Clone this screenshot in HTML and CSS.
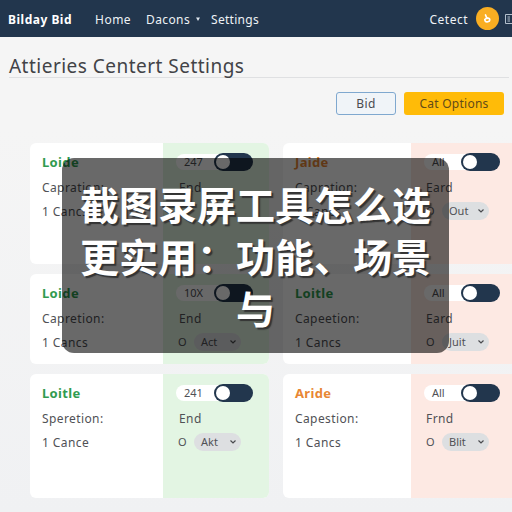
FILE: index.html
```
<!DOCTYPE html>
<html lang="zh">
<head>
<meta charset="utf-8">
<title>Attieries Centert Settings</title>
<link rel="stylesheet" href="styles.css">
</head>
<body>
<header class="nav">
  <span class="brand">Bilday Bid</span>
  <span class="link home">Home</span>
  <span class="link dacons">Dacons</span>
  <svg class="nav-caret" viewBox="0 0 4 4"><path d="M0 .5h4L2 4z" fill="#dfe6ee"/></svg>
  <span class="link settings">Settings</span>
  <span class="link account">Cetect</span>
  <span class="avatar"><svg viewBox="0 0 23 23"><path d="M9.500 8l1.500 3.500M8.800 12.500c2-2.500 5-1.500 5 .300 0 2.300-3.600 2.600-4.600 1.200z" fill="none" stroke="#fff" stroke-width="1.700" stroke-linecap="round" stroke-linejoin="round"/></svg></span>
  <svg class="grid-icon" viewBox="0 0 10 10"><path d="M.5.500H10M.5.500v9H10M2.500 3H5M2.500 5H5M2.500 7H5M7 2h3M7 4.500h3M7 7h3" fill="none" stroke="#b3c0cd"/></svg>
</header>
<h1 class="title">Attieries Centert Settings</h1>
<div class="actions">
  <button class="btn outline">Bid</button>
  <button class="btn solid">Cat Options</button>
</div>
<main class="cards">
  <section class="card green">
    <div class="info"><h2>Loide</h2><p>Capration:</p><p>1 Cancs</p></div>
    <div class="side"><div class="switch"><span class="value">247</span><span class="toggle"></span></div><p>End</p></div>
  </section>
  <section class="card red">
    <div class="info"><h2 class="orange">Jaide</h2><p>Capration:</p><p>1 Cancs</p></div>
    <div class="side"><div class="switch"><span class="value">All</span><span class="toggle"></span></div><p>Eard</p>
      <div class="pick"><span class="zero">O</span><span class="select">Out<svg viewBox="0 0 6 4"><path d="M.5.500 3 3 5.500.5"/></svg></span></div></div>
  </section>
  <section class="card green">
    <div class="info"><h2>Loide</h2><p>Capretion:</p><p>1 Cancs</p></div>
    <div class="side"><div class="switch"><span class="value">10X</span><span class="toggle"></span></div><p>End</p>
      <div class="pick"><span class="zero">O</span><span class="select">Act<svg viewBox="0 0 6 4"><path d="M.5.500 3 3 5.500.5"/></svg></span></div></div>
  </section>
  <section class="card red">
    <div class="info"><h2>Loitle</h2><p>Capeetion:</p><p>1 Cancs</p></div>
    <div class="side"><div class="switch"><span class="value">All</span><span class="toggle"></span></div><p>Eard</p>
      <div class="pick"><span class="zero">O</span><span class="select">Juit<svg viewBox="0 0 6 4"><path d="M.5.500 3 3 5.500.5"/></svg></span></div></div>
  </section>
  <section class="card green">
    <div class="info"><h2>Loitle</h2><p>Speretion:</p><p>1 Cance</p></div>
    <div class="side"><div class="switch"><span class="value">241</span><span class="toggle"></span></div><p>End</p>
      <div class="pick"><span class="zero">O</span><span class="select">Akt<svg viewBox="0 0 6 4"><path d="M.5.500 3 3 5.500.5"/></svg></span></div></div>
  </section>
  <section class="card red">
    <div class="info"><h2 class="orange">Aride</h2><p>Capestion:</p><p>1 Cancs</p></div>
    <div class="side"><div class="switch"><span class="value">All</span><span class="toggle"></span></div><p>Frnd</p>
      <div class="pick"><span class="zero">O</span><span class="select">Blit<svg viewBox="0 0 6 4"><path d="M.5.500 3 3 5.500.5"/></svg></span></div></div>
  </section>
</main>
<div class="caption">截图录屏工具怎么选<br>更实用：功能、场景<br>与</div>
</body>
</html>
```
FILE: styles.css
```
* { box-sizing: border-box; }
body {
  margin: 0;
  width: 512px;
  height: 512px;
  overflow: hidden;
  position: relative;
  background: linear-gradient(#f5f5f5 25%, #f0f1f3);
  font-family: "Noto Sans", "Noto Sans CJK SC", sans-serif;
  color: #505155;
}
.nav {
  height: 37px;
  padding-left: 8px;
  display: flex;
  align-items: center;
  background: #22364d;
  color: #eef2f6;
  font-size: 12px;
  white-space: nowrap;
}
.link { padding-top: 1px; }
.brand { width: 87px; padding-top: 1px; font-weight: 700; letter-spacing: .5px; color: #fff; }
.home { width: 51px; letter-spacing: .5px; }
.dacons { width: 50px; letter-spacing: .4px; }
.settings { letter-spacing: .3px; }
.nav-caret { width: 4px; height: 4px; margin-right: 11px; }
.account { margin-left: auto; margin-right: 8px; letter-spacing: .5px; }
.avatar { width: 23px; height: 23px; border-radius: 50%; background: #f9ae22; }
.avatar svg { display: block; }
.grid-icon { width: 10px; height: 10px; margin-left: 6px; margin-right: -3px; flex: none; }
.title {
  margin: 0 3px 0 9px;
  height: 41px;
  padding-top: 15px;
  border-bottom: 1px solid #dfe0e2;
  font-size: 19px;
  line-height: 29px;
  letter-spacing: .48px;
  font-weight: 400;
  color: #424347;
  white-space: nowrap;
}
.actions { display: flex; justify-content: flex-end; gap: 8px; padding: 14px 8px 0 0; }
.btn {
  height: 23px;
  padding: 0;
  border-radius: 3px;
  font-family: inherit;
  font-size: 12px;
  line-height: 20px;
}
.outline { width: 60px; border: 1px solid #7fa8cf; background: #f0f4f8; color: #4a4b4f; letter-spacing: .4px; padding-top: 1px; }
.solid { width: 100px; border: 0; background: #ffbb08; color: #624b19; letter-spacing: .25px; padding-top: 1px; }
.cards {
  margin: 28px 0 0 30px;
  display: grid;
  grid-template-columns: 239px 240px;
  grid-template-rows: 121px 90px 124px;
  gap: 10px 14px;
}
.card { display: flex; border-radius: 6px; overflow: hidden; background: #fff; }
.info { width: 133px; padding: 10px 0 0 12px; }
.red .info { width: 128px; }
.info h2 { margin: 0; font-size: 13px; line-height: 18px; font-weight: 700; letter-spacing: .35px; color: #309b50; }
.info h2.orange { color: #e88734; }
.card p { margin: 8px 0 0; font-size: 12px; line-height: 18px; letter-spacing: .4px; white-space: nowrap; }
.card p + p { margin-top: 6px; }
.side { flex: 1; padding: 10px 0 0 13px; background: #e3f5e3; }
.red .side { background: #fde9e3; }
.side p { padding-left: 3px; }
.red .side p { padding-left: 2px; }
.switch { display: flex; align-items: center; width: 77px; height: 18px; }
.red .switch { width: 76px; }
.value {
  flex: 1;
  height: 16px;
  margin-right: -12px;
  padding-left: 8px;
  border-radius: 8px 0 0 8px;
  background: #fff;
  font-size: 11px;
  line-height: 16px;
}
.toggle {
  width: 39px;
  height: 18px;
  padding: 2px;
  border-radius: 9px;
  background: #22364d;
}
.toggle::before { content: ""; display: block; width: 14px; height: 14px; border-radius: 50%; background: #fff; }
.pick { display: flex; align-items: center; height: 18px; margin-top: 5px; padding-left: 2px; }
.zero { width: 16px; font-size: 11px; line-height: 16px; }
.select {
  width: 47px;
  height: 18px;
  padding: 0 5px 1px 7px;
  display: flex;
  align-items: center;
  justify-content: space-between;
  border-radius: 9px;
  background: #dddfe1;
  font-size: 11px;
  line-height: 16px;
}
.select svg { width: 6px; height: 4px; fill: none; stroke: #4a4b4f; stroke-width: 1.2; }
.caption {
  position: absolute;
  left: 62px;
  top: 158px;
  width: 387px;
  height: 195px;
  padding-top: 19px;
  border-radius: 12px;
  background: rgba(0, 0, 0, .59);
  color: #fff;
  font-family: "Noto Sans CJK SC", sans-serif;
  font-size: 39px;
  font-weight: 700;
  line-height: 52px;
  text-align: center;
  text-shadow: 2px 2px 1px #333;
}
```
